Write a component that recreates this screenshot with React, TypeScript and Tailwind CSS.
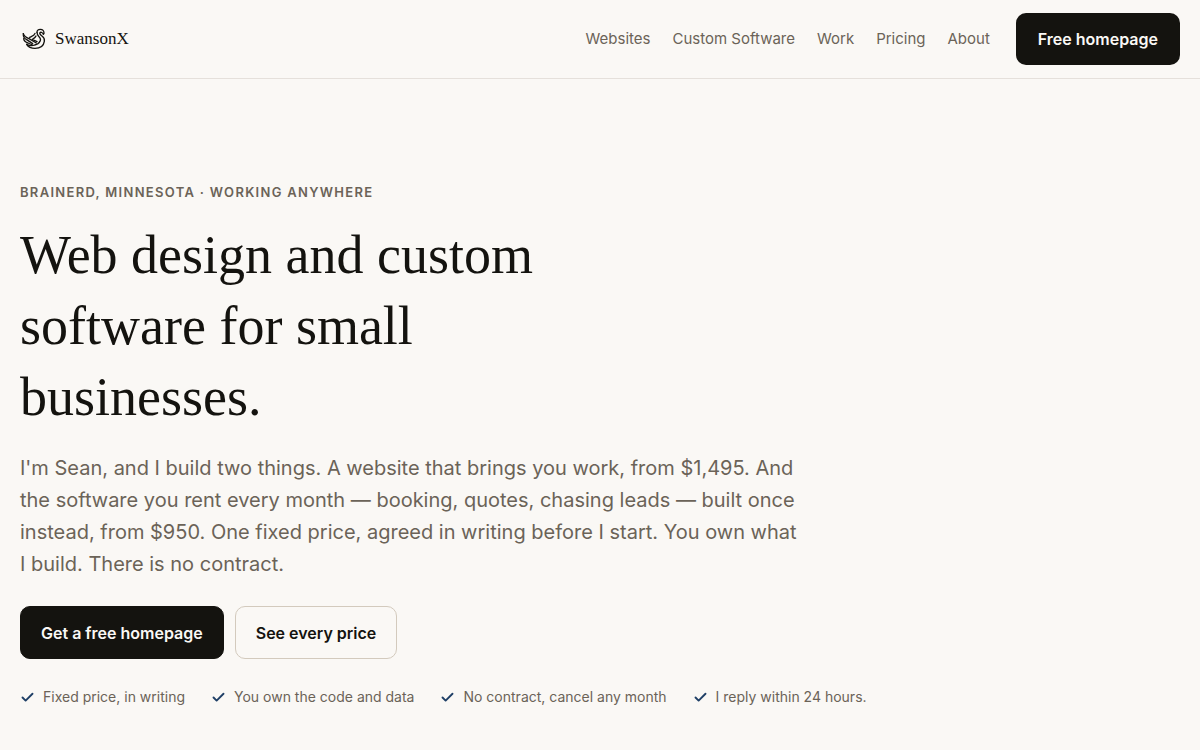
import React from 'react';
import { Check } from 'lucide-react';

const NAV_LINKS = [
  { label: 'Websites', href: '#websites' },
  { label: 'Custom Software', href: '#software' },
  { label: 'Work', href: '#work' },
  { label: 'Pricing', href: '#pricing' },
  { label: 'About', href: '#about' }
];

const PROMISES = [
  'Fixed price, in writing',
  'You own the code and data',
  'No contract, cancel any month',
  'I reply within 24 hours.'
];

const SwanLogo: React.FC = () => (
  <svg
    viewBox="36 23 70 66"
    className="w-6 h-[22px] shrink-0"
    fill="none"
    stroke="currentColor"
    strokeWidth="4"
    strokeLinecap="round"
    strokeLinejoin="round"
    aria-hidden="true"
  >
    {/* Head, neck and body */}
    <path d="M80 36c0-6 4-9 10-9 7 0 11 5 11 12l-2 3c-2-5-7-8-10-5-3 4 3 7 7 11 5 4 7 9 6 15-2 13-13 21-28 21-12 0-20-4-25-12" />
    <path d="M80 36c0 6 2 9 6 13 5 5 6 10 2 15" />
    {/* Wing feathers */}
    <path d="M39 40c2 9 9 12 17 15l22 13" />
    <path d="M39 40c-1 10 3 15 10 18l18 12" />
    <path d="M40 55c1 8 6 11 13 13l14 6" />
    <path d="M49 72c8 4 16 5 24 2 8-2 13-5 15-10" />
    {/* Far wing */}
    <path d="M74 39c-2 7-8 8-16 12" />
    <path d="M77 47c-2 5-6 7-11 10l14 7" />
  </svg>
);

const App: React.FC = () => {
  return (
    <div className="min-h-screen bg-[#faf8f5] text-[#14130f] font-['Inter',sans-serif]">

      {/* Header */}
      <header className="flex items-center justify-between px-5 py-[13px] border-b border-[#e5e0db]">
        <a href="#home" className="flex items-center gap-[9px] pl-[2px] font-['Liberation_Serif',serif] text-[17px]">
          <SwanLogo />
          SwansonX
        </a>

        <nav className="flex items-center text-[15px] text-[#6b6358]">
          <div className="flex items-center gap-[22px] pr-[26px]">
            {NAV_LINKS.map((link) => (
              <a key={link.label} href={link.href} className="hover:text-[#14130f]">
                {link.label}
              </a>
            ))}
          </div>
          <a
            href="#free"
            className="flex items-center h-[52px] px-[22px] rounded-[10px] bg-[#14130f] text-[#faf8f5] text-base font-semibold"
          >
            Free homepage
          </a>
        </nav>
      </header>

      {/* Hero */}
      <main className="px-5 pt-[103px] pb-10">
        <p className="text-[13px] leading-5 font-semibold uppercase tracking-widest text-[#6b6358]">
          Brainerd, Minnesota · Working anywhere
        </p>
        <h1 className="mt-[18px] max-w-[540px] font-['Liberation_Serif',serif] text-[54px] leading-[71px]">
          Web design and custom software for small businesses.
        </h1>
        <p className="mt-[19px] max-w-[785px] text-xl leading-8 text-[#6b6358]">
          I'm Sean, and I build two things. A website that brings you work, from $1,495. And the software you rent
          every month — booking, quotes, chasing leads — built once instead, from $950. One fixed price, agreed in
          writing before I start. You own what I build. There is no contract.
        </p>

        <div className="mt-[26px] flex flex-wrap gap-[11px] text-base font-semibold">
          <a
            href="#free"
            className="flex items-center h-[53px] px-5 rounded-[10px] border border-[#14130f] bg-[#14130f] text-[#faf8f5]"
          >
            Get a free homepage
          </a>
          <a
            href="#pricing"
            className="flex items-center h-[53px] px-5 rounded-[10px] border border-[#d3cabd]"
          >
            See every price
          </a>
        </div>

        <ul className="mt-[26px] flex flex-wrap gap-x-[26px] gap-y-2 text-sm leading-6 text-[#6b6358]">
          {PROMISES.map((promise) => (
            <li key={promise} className="flex items-center gap-2">
              <Check className="w-[15px] h-[15px] text-[#1f3f66]" strokeWidth={3} />
              {promise}
            </li>
          ))}
        </ul>
      </main>

    </div>
  );
};

export default App;
